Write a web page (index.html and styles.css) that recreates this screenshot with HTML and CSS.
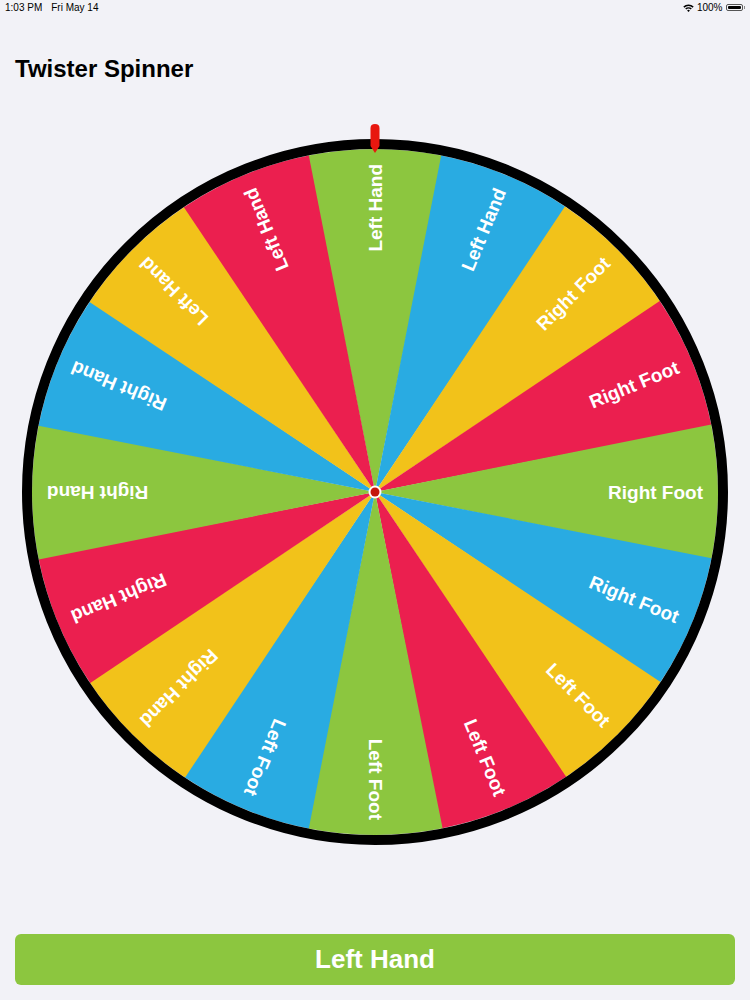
FILE: index.html
```html
<!DOCTYPE html>
<html>
<head>
<meta charset="utf-8">
<link rel="stylesheet" href="styles.css">
</head>
<body>
<div class="status">
  <div class="status-left"><span>1:03 PM</span><span class="date">Fri May 14</span></div>
  <div class="status-right">
    <svg class="wifi" width="11" height="8" viewBox="0 0 11 8">
      <path d="M0.3 2.6 A7.4 7.4 0 0 1 10.7 2.6 L9.6 3.7 A5.9 5.9 0 0 0 1.4 3.7 Z" fill="#000"/>
      <path d="M2.2 4.5 A4.7 4.7 0 0 1 8.8 4.5 L7.7 5.6 A3.2 3.2 0 0 0 3.3 5.6 Z" fill="#000"/>
      <path d="M4.1 6.5 A2 2 0 0 1 6.9 6.5 L5.5 7.9 Z" fill="#000"/>
    </svg>
    <span>100%</span>
    <span class="battery"><span class="battery-fill"></span></span><span class="battery-cap"></span>
  </div>
</div>
<div class="header"><h1 class="title">Twister Spinner</h1></div>
<div class="wheel-wrap">
<svg class="wheel" width="750" height="750" viewBox="0 0 750 750">
  <defs>
    <path id="wedge" d="M0 0 L336.2 -67.6 A343 343 0 0 1 336.2 67.6 Z"/>
  </defs>
  <g transform="translate(375 382)" font-family="Liberation Sans, Arial, sans-serif" font-weight="bold" font-size="19" fill="#fff">
    <g transform="rotate(-90)"><use href="#wedge" fill="#8cc63f"/></g>
    <g transform="rotate(-67.5)"><use href="#wedge" fill="#29abe2"/></g>
    <g transform="rotate(-45)"><use href="#wedge" fill="#f2c21a"/></g>
    <g transform="rotate(-22.5)"><use href="#wedge" fill="#eb1f4f"/></g>
    <g transform="rotate(0)"><use href="#wedge" fill="#8cc63f"/></g>
    <g transform="rotate(22.5)"><use href="#wedge" fill="#29abe2"/></g>
    <g transform="rotate(45)"><use href="#wedge" fill="#f2c21a"/></g>
    <g transform="rotate(67.5)"><use href="#wedge" fill="#eb1f4f"/></g>
    <g transform="rotate(90)"><use href="#wedge" fill="#8cc63f"/></g>
    <g transform="rotate(112.5)"><use href="#wedge" fill="#29abe2"/></g>
    <g transform="rotate(135)"><use href="#wedge" fill="#f2c21a"/></g>
    <g transform="rotate(157.5)"><use href="#wedge" fill="#eb1f4f"/></g>
    <g transform="rotate(180)"><use href="#wedge" fill="#8cc63f"/></g>
    <g transform="rotate(202.5)"><use href="#wedge" fill="#29abe2"/></g>
    <g transform="rotate(225)"><use href="#wedge" fill="#f2c21a"/></g>
    <g transform="rotate(247.5)"><use href="#wedge" fill="#eb1f4f"/></g>

    <g text-anchor="end" dominant-baseline="central">
      <text transform="rotate(-90)" x="328" y="0">Left Hand</text>
      <text transform="rotate(-67.5)" x="328" y="0">Left Hand</text>
      <text transform="rotate(-45)" x="328" y="0">Right Foot</text>
      <text transform="rotate(-22.5)" x="328" y="0">Right Foot</text>
      <text transform="rotate(0)" x="328" y="0">Right Foot</text>
      <text transform="rotate(22.5)" x="328" y="0">Right Foot</text>
      <text transform="rotate(45)" x="328" y="0">Left Foot</text>
      <text transform="rotate(67.5)" x="328" y="0">Left Foot</text>
      <text transform="rotate(90)" x="328" y="0">Left Foot</text>
      <text transform="rotate(112.5)" x="328" y="0">Left Foot</text>
      <text transform="rotate(135)" x="328" y="0">Right Hand</text>
      <text transform="rotate(157.5)" x="328" y="0">Right Hand</text>
      <text transform="rotate(180)" x="328" y="0">Right Hand</text>
      <text transform="rotate(202.5)" x="328" y="0">Right Hand</text>
      <text transform="rotate(225)" x="328" y="0">Left Hand</text>
      <text transform="rotate(247.5)" x="328" y="0">Left Hand</text>
    </g>

    <circle r="348" fill="none" stroke="#000" stroke-width="10"/>
    <circle r="6.5" fill="#fff"/>
    <circle r="4.5" fill="#c4170c"/>
    <path d="M-4.5 -364 Q-4.5 -368 0 -368 Q4.5 -368 4.5 -364 L4.5 -346 L0 -339 L-4.5 -346 Z" fill="#e8170f"/>
  </g>
</svg>
</div>
<div class="footer">
  <button class="spin">Left Hand</button>
</div>
</body>
</html>
```

FILE: styles.css
```css
html, body {
  margin: 0;
  padding: 0;
  background: #f2f2f7;
  font-family: "Liberation Sans", Arial, sans-serif;
  color: #000;
  width: 750px;
  height: 1000px;
  overflow: hidden;
}

.status {
  height: 20px;
  display: flex;
  justify-content: space-between;
  align-items: flex-start;
  font-size: 10px;
  padding: 2px 5px 0 5px;
  box-sizing: border-box;
}

.status-left .date {
  margin-left: 9px;
}

.status-right {
  display: flex;
  align-items: center;
  gap: 3px;
}

.wifi {
  display: block;
}

.battery {
  display: inline-flex;
  width: 17px;
  height: 7px;
  border: 1px solid #555;
  border-radius: 2px;
  padding: 1px;
  box-sizing: border-box;
}

.battery-fill {
  flex: 1;
  background: #000;
  border-radius: 1px;
}

.battery-cap {
  width: 1.5px;
  height: 3px;
  background: #888;
  margin-left: -2px;
}

.header {
  height: 90px;
  padding: 35px 15px 0 15px;
  box-sizing: border-box;
}

.title {
  margin: 0;
  font-size: 24px;
  line-height: 28px;
  font-weight: bold;
}

.wheel-wrap {
  height: 750px;
}

.wheel {
  display: block;
}

.footer {
  padding: 74px 15px 0 15px;
}

.spin {
  display: flex;
  align-items: center;
  justify-content: center;
  width: 720px;
  height: 51px;
  border: none;
  border-radius: 6px;
  background: #8cc63f;
  color: #fff;
  font-family: "Liberation Sans", Arial, sans-serif;
  font-weight: bold;
  font-size: 26px;
  padding: 0;
}
```
